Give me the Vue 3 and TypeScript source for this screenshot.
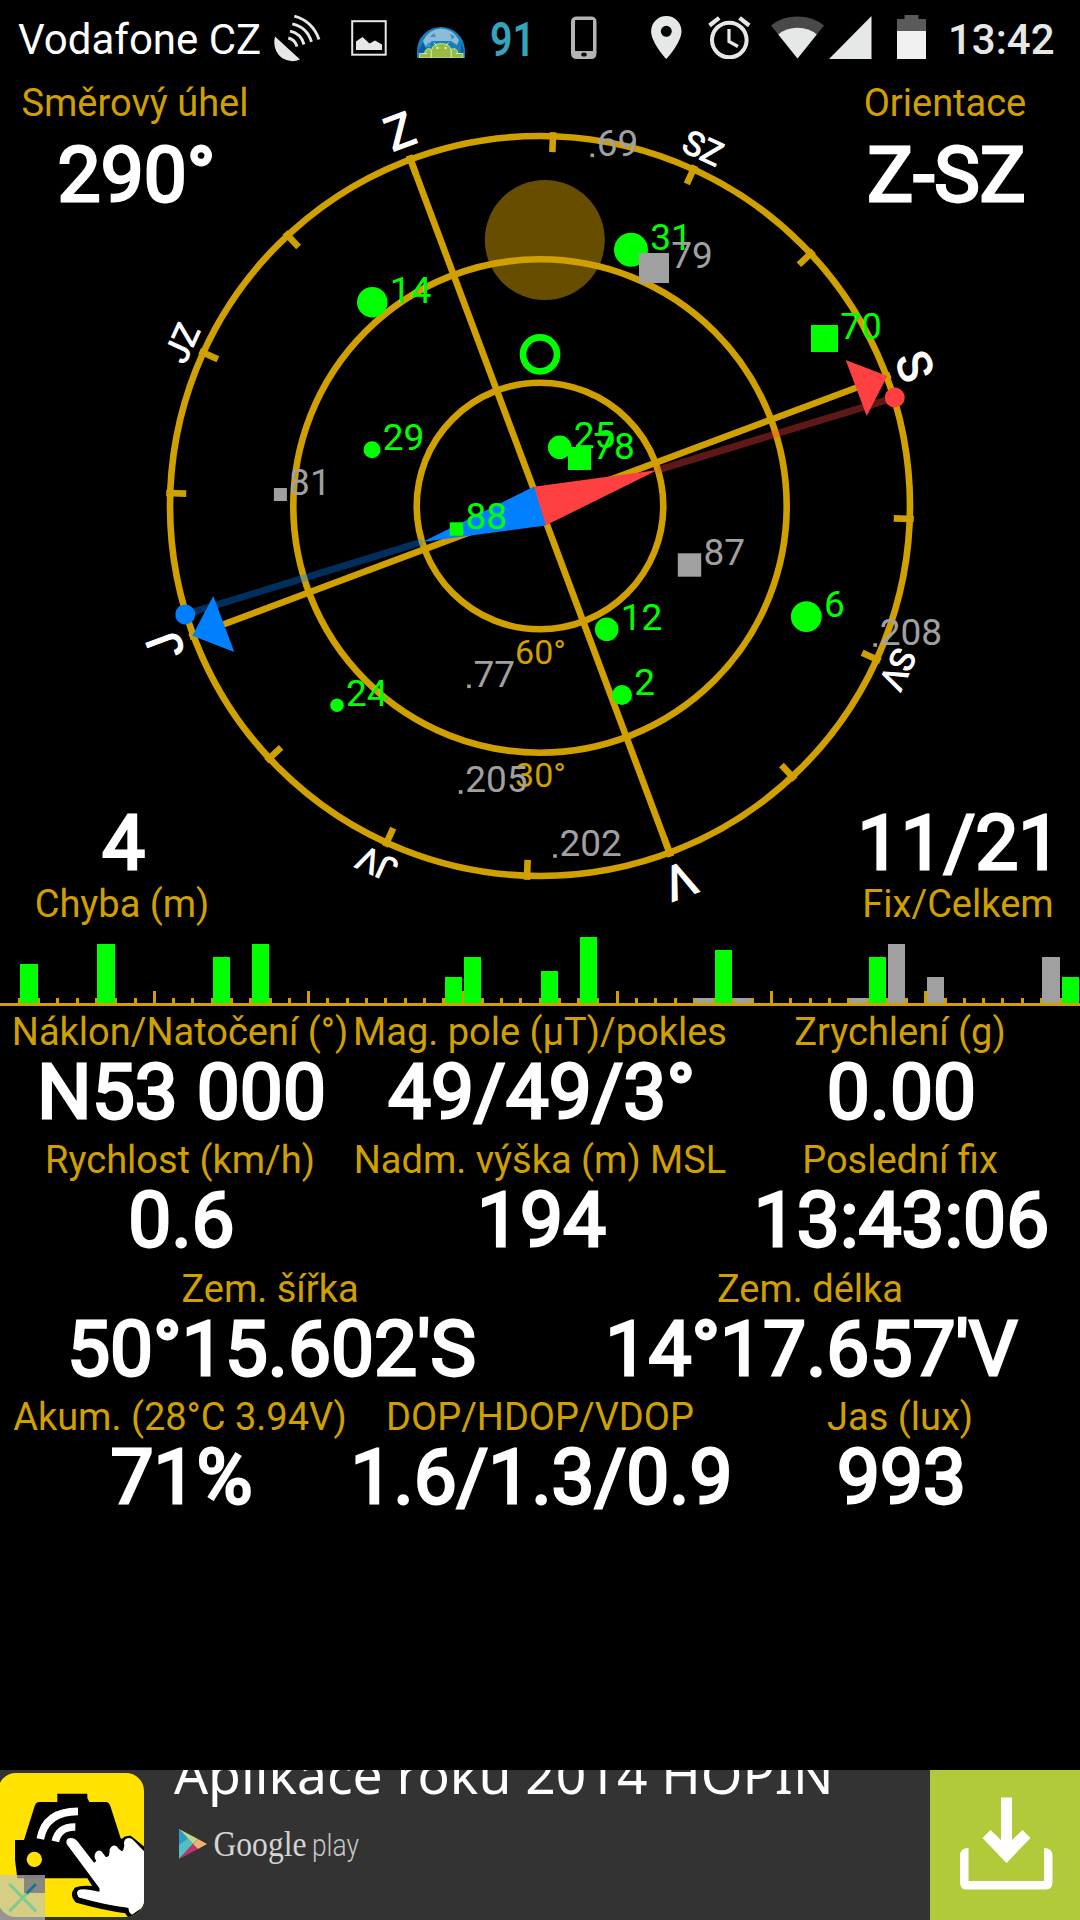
<script setup lang="ts">
interface Satellite {
  id: number
  x: number
  y: number
  r: number
  shape: 'circle' | 'square'
  fix: boolean
}

const HEADING = 69.5
const CX = 540
const CY = 506

const satellites: Satellite[] = [
  { id: 14, x: 372.3, y: 302.3, r: 15.3, shape: 'circle', fix: true },
  { id: 31, x: 631, y: 249.7, r: 17, shape: 'circle', fix: true },
  { id: 79, x: 654, y: 268, r: 15, shape: 'square', fix: false },
  { id: 70, x: 824.5, y: 338.5, r: 13.5, shape: 'square', fix: true },
  { id: 29, x: 372, y: 449.7, r: 8.5, shape: 'circle', fix: true },
  { id: 81, x: 280.4, y: 494.5, r: 6.5, shape: 'square', fix: false },
  { id: 25, x: 559.7, y: 447.3, r: 11.8, shape: 'circle', fix: true },
  { id: 78, x: 579.5, y: 458.5, r: 11.5, shape: 'square', fix: true },
  { id: 88, x: 456.5, y: 529, r: 6.7, shape: 'square', fix: true },
  { id: 87, x: 689.5, y: 565, r: 11.7, shape: 'square', fix: false },
  { id: 12, x: 606.7, y: 629.3, r: 11.8, shape: 'circle', fix: true },
  { id: 2, x: 622, y: 695, r: 10, shape: 'circle', fix: true },
  { id: 6, x: 806.3, y: 616.7, r: 15.4, shape: 'circle', fix: true },
  { id: 24, x: 337, y: 705.3, r: 6.8, shape: 'circle', fix: true },
  { id: 208, x: 875.2, y: 645, r: 1.8, shape: 'square', fix: false },
  { id: 202, x: 555, y: 856, r: 1.8, shape: 'square', fix: false },
  { id: 205, x: 460.7, y: 792, r: 1.8, shape: 'square', fix: false },
  { id: 77, x: 469, y: 686.3, r: 1.8, shape: 'square', fix: false },
  { id: 69, x: 592.3, y: 155.3, r: 1.8, shape: 'square', fix: false },
]

const winds = ['S', 'SV', 'V', 'JV', 'J', 'JZ', 'Z', 'SZ'].map((name, i) => ({
  name,
  angle: HEADING + i * 45,
  major: name.length === 1,
}))

const ticks = Array.from({ length: 16 }, (_, i) => HEADING + i * 22.5)

const STEP = 1080 / 56
const scale = Array.from({ length: 55 }, (_, i) => {
  const k = i + 1
  return { x: k * STEP - 1.4, top: k % 8 === 0 ? 991 : 998 }
})

const bars = (
  [
    [1, 964, 1], [5, 944, 1], [11, 957, 1], [13, 944, 1], [23, 977, 1], [24, 957, 1],
    [28, 971, 1], [30, 937, 1], [36, 998, 0], [37, 950, 1], [38, 998, 0], [44, 998, 0],
    [45, 957, 1], [46, 944, 0], [48, 977, 0], [54, 957, 0], [55, 977, 1],
  ] as [number, number, number][]
).map(([k, top, fix]) => ({ x: k * STEP + 1, top, fix: fix === 1 }))

const rows = [
  [
    { label: 'Náklon/Natočení (°)', value: 'N53 000' },
    { label: 'Mag. pole (µT)/pokles', value: '49/49/3°' },
    { label: 'Zrychlení (g)', value: '0.00' },
  ],
  [
    { label: 'Rychlost (km/h)', value: '0.6' },
    { label: 'Nadm. výška (m) MSL', value: '194' },
    { label: 'Poslední fix', value: '13:43:06' },
  ],
  [
    { label: 'Zem. šířka', value: "50°15.602'S" },
    { label: 'Zem. délka', value: "14°17.657'V" },
  ],
  [
    { label: 'Akum. (28°C 3.94V)', value: '71%' },
    { label: 'DOP/HDOP/VDOP', value: '1.6/1.3/0.9' },
    { label: 'Jas (lux)', value: '993' },
  ],
]
</script>

<template>
  <div class="screen">
    <header class="status">
      <span class="carrier">Vodafone CZ</span>
      <svg class="i-dish" width="48" height="48" viewBox="0 0 48 48">
        <path d="M2 22.500 L27 45.500 Q18 49.500 9 44 Q-1 36 2 22.500Z" fill="#e6e8e8" />
        <g fill="none" stroke="#e6e8e8" stroke-width="2.900">
          <path d="M15.300 24 Q22 25.500 24 32.500" />
          <path d="M17 17.200 Q28 19.500 31 30.500" />
          <path d="M19.300 9.800 Q34 13 38.500 27.800" />
          <path d="M21.300 2.200 Q39.500 7 46 25.500" />
        </g>
      </svg>
      <svg class="i-pic" width="37" height="37" viewBox="0 0 37 37">
        <rect x="1.200" y="1.200" width="33.500" height="33.500" fill="none" stroke="#e6e8e8" stroke-width="2" />
        <path d="M5 30V21.500L11.500 17L18.500 23.500L24 20.500L31 24.500V30Z" fill="#e6e8e8" />
      </svg>
      <svg class="i-globe" width="49" height="31" viewBox="0 0 49 31">
        <path d="M0 31V24A24 24 0 0 1 48 24V31Z" fill="#1580bd" />
        <path d="M6 14Q12 2 24 1.500Q36 2 42 13L40 18L34 14L15 14L9 20Z" fill="#8dbdd6" />
        <path d="M13 10L17 6L19 10ZM33 7L38 9L35 13ZM8 20L12 15L14 20Z" fill="#3f94c4" />
        <path d="M1 24L6 16L9 22L5 29ZM44 16L47 24L44 28Z" fill="#0b5aa4" />
        <g fill="#97bc3f" stroke="#d8e8b0" stroke-width=".8">
          <path d="M2.500 31V26.500H8V24Q10 20.500 14 22V31Z" />
          <path d="M46 31V26.500H40.500V24Q38.500 20.500 34.500 22V31Z" />
          <path d="M14.500 31V24Q15 16.500 24.300 16.500Q33.600 16.500 34 24V31Z" />
        </g>
        <path d="M5 26.500H10M39 26.500H44" stroke="#d8e8b0" stroke-width="1" />
        <path d="M17 15.500L19.500 19M31.500 15.500L29 19" stroke="#d8e8b0" stroke-width="1" />
        <circle cx="20.500" cy="21" r="1" fill="#fff" />
        <circle cx="28.500" cy="21" r="1" fill="#fff" />
      </svg>
      <svg class="i-temp" width="46" height="44" viewBox="0 0 46 44">
        <text x="1" y="39.500" font-size="49" font-weight="600" textLength="45" lengthAdjust="spacingAndGlyphs" fill="#36a3bd">91</text>
      </svg>
      <svg class="i-phone" width="26" height="44" viewBox="0 0 26 44">
        <path fill-rule="evenodd" fill="#b4b4b4" d="M6 0.500H20Q25.500 0.500 25.500 6V37Q25.500 43 20 43H6Q0 43 0 37V6Q0 0.500 6 0.500ZM4 4V35H22V4Z" />
        <ellipse cx="13" cy="38.500" rx="2.800" ry="2" fill="#111" />
      </svg>
      <svg class="i-pin" width="31" height="43" viewBox="0 0 31 43">
        <path fill-rule="evenodd" fill="#e6e8e8" d="M15.300 0A15.200 15.200 0 0 1 30.500 15.200C30.500 26.500 15.300 43 15.300 43S0.100 26.500 0.100 15.200A15.200 15.200 0 0 1 15.300 0ZM15.300 9.800A5.500 5.500 0 1 0 15.300 20.800A5.500 5.500 0 1 0 15.300 9.800Z" />
      </svg>
      <svg class="i-alarm" width="43" height="43" viewBox="0 0 43 43">
        <g fill="none" stroke="#e6e8e8">
          <circle cx="21.300" cy="24" r="17.300" stroke-width="4" />
          <path d="M1.500 9.500L11.200 1.800M31.500 1.800L41.200 9.500" stroke-width="4.200" />
          <path d="M21 13V25.500L30 30.500" stroke-width="3.200" />
        </g>
      </svg>
      <svg class="i-wifi" width="53" height="43" viewBox="0 0 53 43">
        <path d="M26.500 42.500L0 9.500Q11 0.500 26.500 0.500T53 9.500Z" fill="#494949" />
        <path d="M26.500 42.500L7.300 18.500Q15 11.800 26.500 11.800T45.700 18.500Z" fill="#e6e8e8" />
      </svg>
      <svg class="i-signal" width="43" height="43" viewBox="0 0 43 43">
        <path d="M42.500 0V43H0Z" fill="#e6e8e8" />
      </svg>
      <svg class="i-batt" width="29" height="44" viewBox="0 0 29 44">
        <path d="M7.500 0H21.500V4H29V17H0V4H7.500Z" fill="#5a5a5a" />
        <rect y="16" width="29" height="28" fill="#f0f0f0" />
      </svg>
      <span class="clock">13:42</span>
    </header>

    <section class="sky">
      <svg class="dial" width="1080" height="858" viewBox="0 75 1080 858">
        <circle cx="544.800" cy="240" r="60" fill="#674d00" />
        <g fill="none" stroke="#d0a000" stroke-width="6.600">
          <circle :cx="CX" :cy="CY" r="370" />
          <circle :cx="CX" :cy="CY" r="246.700" />
          <circle :cx="CX" :cy="CY" r="123.300" />
          <g :transform="`rotate(${HEADING} ${CX} ${CY})`">
            <path d="M540 132V880M166 506H914" />
          </g>
          <path
            v-for="a in ticks"
            :key="a"
            d="M540 132V152"
            :transform="`rotate(${a} ${CX} ${CY})`"
          />
        </g>
        <g fill="#d0a000" font-size="34" text-anchor="middle">
          <text x="540.500" y="664">60°</text>
          <text x="540.500" y="787">30°</text>
        </g>
        <g>
          <text
            v-for="w in winds"
            :key="w.name"
            :class="['wind', { major: w.major }]"
            x="540"
            :y="w.major ? 122.500 : 124.500"
            :transform="`rotate(${w.angle} ${CX} ${CY})`"
          >{{ w.name }}</text>
        </g>
        <g :transform="`rotate(73 ${CX} ${CY})`">
          <path d="M540 383V135" stroke="#ff4040" stroke-opacity=".37" stroke-width="7" />
          <path d="M540 629V877" stroke="#0080ff" stroke-opacity=".37" stroke-width="7" />
          <path d="M519.700 506.500H560.300L540 383Z" fill="#ff4040" />
          <path d="M519.700 506H560.300L540 629Z" fill="#0080ff" />
          <circle cx="540" cy="135" r="10" fill="#ff4040" />
          <circle cx="540" cy="877" r="10" fill="#0080ff" />
        </g>
        <path d="M887.300 376L845.700 360L866.700 416Z" fill="#ff4040" />
        <path d="M192.300 635.700L213.300 596L234.300 652Z" fill="#0080ff" />
        <circle cx="540" cy="354.300" r="17" fill="none" stroke="#00ff00" stroke-width="6.700" />
        <g v-for="s in satellites" :key="s.id" :fill="s.fix ? '#00ff00' : '#a0a0a0'">
          <circle v-if="s.shape === 'circle'" :cx="s.x" :cy="s.y" :r="s.r" />
          <rect v-else :x="s.x - s.r" :y="s.y - s.r" :width="s.r * 2" :height="s.r * 2" />
          <text :x="s.x + s.r + (s.r < 2 ? 2.7 : 2.2)" :y="s.y + 0.2" font-size="37">{{ s.id }}</text>
        </g>
      </svg>
      <div class="corners top">
        <div class="corner">
          <span class="label">Směrový úhel</span>
          <span class="value">290°</span>
        </div>
        <div class="corner">
          <span class="label">Orientace</span>
          <span class="value">Z-SZ</span>
        </div>
      </div>
      <div class="corners bottom">
        <div class="corner">
          <span class="value">4</span>
          <span class="label">Chyba (m)</span>
        </div>
        <div class="corner">
          <span class="value">11/21</span>
          <span class="label">Fix/Celkem</span>
        </div>
      </div>
    </section>

    <svg class="chart" width="1080" height="74" viewBox="0 933 1080 74" shape-rendering="crispEdges">
      <rect v-for="t in scale" :key="t.x" :x="t.x" :y="t.top" width="3" :height="1004 - t.top" fill="#d0a000" />
      <rect
        v-for="b in bars"
        :key="b.x"
        :x="b.x"
        :y="b.top"
        width="17.300"
        :height="1003 - b.top"
        :fill="b.fix ? '#00ff00' : '#a0a0a0'"
      />
      <rect x="0" y="1003" width="1080" height="3" fill="#d0a000" />
    </svg>

    <main class="table">
      <div v-for="(row, i) in rows" :key="i" class="row">
        <div v-for="c in row" :key="c.label" class="cell">
          <span class="label">{{ c.label }}</span>
          <span class="value">{{ c.value }}</span>
        </div>
      </div>
    </main>

    <footer class="ad">
      <div class="ad-icon">
        <svg width="144" height="150" viewBox="0 0 432 450">
          <defs>
            <clipPath id="tile"><rect x="-6" y="9" width="438" height="432" rx="54" /></clipPath>
          </defs>
          <g clip-path="url(#tile)">
            <rect y="9" width="432" height="432" fill="#ffe200" />
            <path d="M172 96V71H262V84L268 96H320Q328 98 331 108L362 205L400 230V325H52L45 270V210H72L104 108Q108 96 118 96Z" fill="#000" />
            <circle cx="103" cy="268" r="23" fill="#ffe200" />
            <g fill="none" stroke="#fff" stroke-width="23">
              <path d="M121 207Q136 124 234 124" />
              <path d="M166 214Q176 170 226 171" />
            </g>
            <path d="M213 226Q198 208 212 205Q224 202 234 216L280 276Q280 246 300 244L318 256Q322 228 344 226L362 236Q368 204 390 206L444 250V408L396 440Q384 432 382 422Q308 412 232 390Q218 376 230 360Q248 352 292 358Z" fill="#fff" stroke="#000" stroke-width="17" stroke-linejoin="round" />
            <path d="M200 222Q196 205 212 204Q224 203 234 216L282 278L290 272Q278 262 288 246Q296 238 304 244L318 262L332 256Q324 240 334 230Q346 220 356 236L368 246L380 236Q366 222 376 208Q390 198 402 212L444 256V400L396 434Q384 426 386 412Q310 402 236 380Q226 368 236 360Q250 354 300 366L298 354Z" fill="#fff" />
          </g>
          <rect y="315" width="135" height="135" fill="#c4c4c4" fill-opacity=".68" />
          <rect x="72" y="315" width="63" height="54" fill="#808080" fill-opacity=".9" />
          <path d="M28 342L108 424M108 342L28 424" stroke="#7ccb90" stroke-width="9" />
          <path d="M108 342L80 370" stroke="#1f7090" stroke-width="9" />
        </svg>
      </div>
      <div class="ad-body">
        <span class="ad-title">Aplikace roku 2014 HOPIN</span>
        <svg class="play" width="190" height="44" viewBox="0 0 190 44">
          <path d="M5 5V35L19 20Z" fill="#52bfc4" />
          <path d="M5 5L19 20L24 15Z" fill="#bcd88a" />
          <path d="M5 5L14 14.500L5 21Z" fill="#2b9cc8" />
          <path d="M5 35L19 20L24 25Z" fill="#c2336e" />
          <path d="M19 20L24 15L33 20L24 25Z" fill="#f4b070" />
          <text class="google" x="39.500" y="31.500" font-size="35" textLength="93" lengthAdjust="spacingAndGlyphs">Google</text>
          <text class="play-word" x="138" y="31.500" font-size="31" textLength="47" lengthAdjust="spacingAndGlyphs">play</text>
        </svg>
      </div>
      <div class="ad-button">
        <svg width="94" height="94" viewBox="0 0 94 94">
          <path d="M42 1.500H53V44L63.500 34L71.500 42L47.500 67L23.500 42L31.500 34L42 44Z" fill="#fff" />
          <path d="M9.500 52Q1 52 1 60V86Q1 93.500 7 93.500H87Q93.500 93.500 93.500 86V60Q93.500 52 85 52V85H9.500Z" fill="#fff" />
        </svg>
      </div>
    </footer>
  </div>
</template>

<style>
body {
  background: #000;
}
</style>

<style scoped>
.screen {
  display: flex;
  flex-direction: column;
  width: 1080px;
  height: 1920px;
  overflow: hidden;
  background: #000;
  color: #fff;
  font-family: Roboto, "Noto Sans", sans-serif;
}

svg {
  display: block;
  flex: none;
}

.status {
  display: flex;
  height: 75px;
  flex: none;
  align-items: flex-start;
  font-size: 42px;
  line-height: 50px;
}

.carrier {
  width: 255px;
  margin: 15px 0 0 18px;
  white-space: nowrap;
}

.i-dish { margin: 14px 0 0; }
.i-pic { margin: 20px 0 0 30px; }
.i-globe { margin: 27px 0 0 29px; }
.i-temp { margin: 16px 0 0 23px; }
.i-phone { margin: 16px 0 0 36px; }
.i-pin { margin: 16px 0 0 54px; }
.i-alarm { margin: 16px 0 0 26px; }
.i-wifi { margin: 16px 0 0 20px; }
.i-signal { margin: 16px 0 0 5px; }
.i-batt { margin: 15px 0 0 25px; }

.clock {
  margin: 15px 0 0 22px;
  color: #e6e8e8;
  font-weight: 500;
}

.sky {
  position: relative;
  display: flex;
  height: 858px;
  flex: none;
  flex-direction: column;
  justify-content: space-between;
}

.dial {
  position: absolute;
  inset: 0;
}

.wind {
  fill: #fff;
  font-size: 33.5px;
  stroke: #fff;
  stroke-width: 1px;
  text-anchor: middle;
}

.wind.major {
  font-size: 47px;
  stroke-width: 1.4px;
}

.corners {
  position: relative;
  display: flex;
  justify-content: space-between;
}

.corner {
  display: flex;
  flex-direction: column;
  align-items: center;
}

.top { padding-top: 4px; }
.top .corner { width: 270px; }
.top .value { line-height: 97px; }
.bottom { padding-bottom: 5px; }
.bottom .corner { width: 244px; }
.bottom .value { line-height: 73px; }

.label {
  color: #d0a000;
  font-size: 38px;
  line-height: 48px;
  white-space: nowrap;
}

.value {
  padding-left: 3px;
  font-size: 76.6px;
  line-height: 72.6px;
  white-space: nowrap;
  -webkit-text-stroke: 2.8px #fff;
}

.table {
  display: flex;
  flex: 1;
  flex-direction: column;
  padding-top: 1px;
}

.row {
  display: flex;
  height: 128.4px;
}

.cell {
  display: flex;
  width: 0;
  flex: 1;
  flex-direction: column;
  align-items: center;
}

.ad {
  display: flex;
  height: 150px;
  flex: none;
  overflow: hidden;
  background: #333;
}

.ad-icon {
  width: 144px;
  flex: none;
}

.ad-body {
  display: flex;
  flex: 1;
  flex-direction: column;
  padding-left: 30px;
}

.ad-title {
  height: 54px;
  margin-top: -26px;
  font-family: "Noto Sans", "Open Sans", sans-serif;
  font-size: 53.4px;
  line-height: 60px;
  white-space: nowrap;
}

.play {
  margin-top: 26px;
}

.google {
  fill: #d4d4d4;
  font-family: "Liberation Serif", serif;
}

.play-word {
  fill: #c8c8c8;
  font-weight: 300;
}

.ad-button {
  display: flex;
  width: 150px;
  flex: none;
  align-items: flex-start;
  justify-content: center;
  padding: 26px 0 0 2px;
  box-sizing: border-box;
  background: #b0ca3a;
}
</style>
